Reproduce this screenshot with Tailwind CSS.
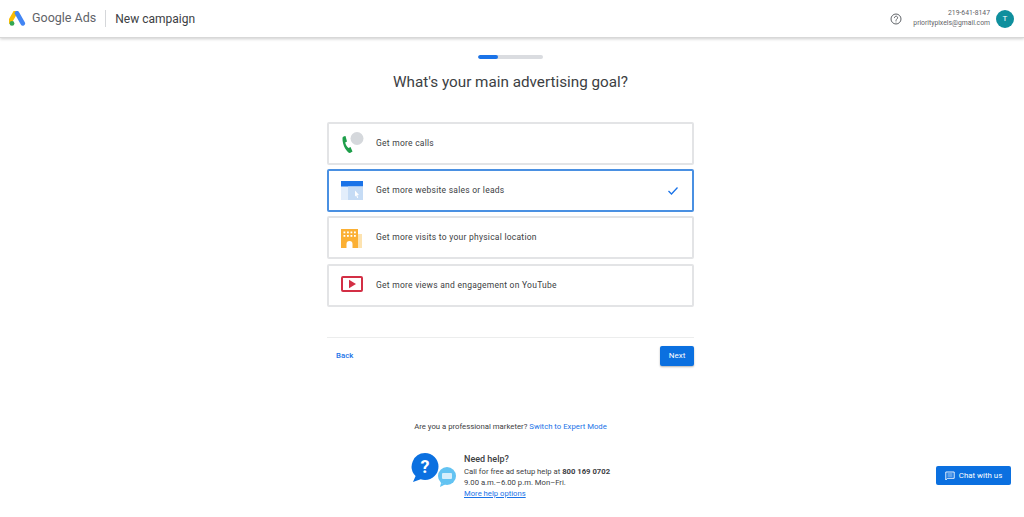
<!DOCTYPE html>
<html lang="en">

<head>
	<meta charset="UTF-8">
	<meta name="viewport" content="width=device-width, initial-scale=1.0">
	<title>New campaign - Google Ads</title>
	<script src="https://cdn.jsdelivr.net/npm/@tailwindcss/browser@4"></script>
</head>

<body class="bg-white h-[517px] overflow-hidden relative font-['Roboto',sans-serif] text-[#3c4043]">
	<!-- Header -->
	<header class="h-[38px] flex items-center justify-between bg-white border-b border-[#d8d8d8] shadow-[0_1px_3px_rgba(0,0,0,0.2)]">
		<div class="flex items-center pl-[9px]">
			<svg class="w-[17px] h-[15px]" viewBox="0 0 17 15">
				<path d="M6.2 1.6 1 10.6" stroke="#fbbc04" stroke-width="4.4" stroke-linecap="round" fill="none"/>
				<path d="M8 2.2 13.8 12.4" stroke="#4285f4" stroke-width="4.6" stroke-linecap="round" fill="none"/>
				<circle cx="3" cy="12.4" r="2.4" fill="#34a853"/>
			</svg>
			<span class="ml-[6px] text-[12.5px] text-[#5f6368]">Google Ads</span>
			<span class="ml-[9px] w-px h-[17px] bg-[#d5d7da]"></span>
			<span class="ml-[9px] text-[12px] text-[#3c4043]">New campaign</span>
		</div>
		<div class="flex items-center pr-[10px]">
			<svg class="w-[12px] h-[12px] text-[#5f6368]" viewBox="0 0 24 24" fill="none" stroke="currentColor" stroke-width="2">
				<circle cx="12" cy="12" r="10"/>
				<path d="M8.8 9.4a3.2 3.2 0 1 1 5 2.7c-1.1.8-1.8 1.4-1.8 2.9" stroke-linecap="round"/>
				<path d="M12 17.2v1.6"/>
			</svg>
			<div class="ml-[11px] text-right text-[6.8px] leading-[9.5px] text-[#5f6368]">
				<div>219-641-8147</div>
				<div>prioritypixels@gmail.com</div>
			</div>
			<div class="ml-[6px] w-[18px] h-[18px] rounded-full bg-[#0f8f9d] text-white text-[8px] flex items-center justify-center">T</div>
		</div>
	</header>

	<main class="w-[367px] ml-[327px]">
		<!-- Progress -->
		<div class="mt-[17px] mx-auto w-[65px] h-[4px] rounded-full bg-[#dadce0] overflow-hidden">
			<div class="w-[20px] h-full bg-[#1a73e8] rounded-full"></div>
		</div>
		<h1 class="mt-[11px] text-center whitespace-nowrap text-[15.25px] leading-[24px] text-[#3c4043]">What's your main advertising goal?</h1>

		<!-- Goals -->
		<div class="mt-[28px] flex flex-col">
			<div class="h-[43px] flex items-center border-2 border-[#e3e4e6] rounded-[2px]">
				<svg class="ml-[11px] w-[24px] h-[24px]" viewBox="0 0 24 24">
					<circle cx="17" cy="6.5" r="6.5" fill="#d5d8dc"/>
					<path d="M2.500 6C2.500 4.800 3.500 4.500 5.500 4L7 9.500 5.200 10.600C5.800 13 7 15 8.500 16L10.500 15 12.500 19.500 10 21C8 21.500 2 14 2.500 6z" fill="#1e9e4a"/>
				</svg>
				<span class="ml-[12px] text-[8.5px] tracking-[0.25px] text-[#3c4043]">Get more calls</span>
			</div>
			<div class="mt-[4px] h-[43px] flex items-center border-2 border-[#4a90e2] rounded-[2px]">
				<svg class="ml-[12px] w-[24px] h-[20px]" viewBox="0 0 24 20">
					<rect y="0" width="22" height="19" fill="#e3eefb"/>
					<rect y="0" width="22" height="5.5" fill="#1a73e8"/>
					<rect x="7" y="5.5" width="15" height="13.5" fill="#c6dcf5"/>
					<path d="M14 9.500 18 14l-1.800.2 1 2.600-1 .3-1-2.500-1.200 1z" fill="#fff"/>
				</svg>
				<span class="ml-[11px] text-[8.5px] tracking-[0.25px] text-[#3c4043]">Get more website sales or leads</span>
				<svg class="ml-auto mr-[13px] w-[12px] h-[10px]" viewBox="0 0 12 10" fill="none" stroke="#1a73e8" stroke-width="1.3">
					<path d="M1.500 5 4.500 8 10.500 1.500"/>
				</svg>
			</div>
			<div class="mt-[4px] h-[43px] flex items-center border-2 border-[#e3e4e6] rounded-[2px]">
				<svg class="ml-[11px] w-[24px] h-[20px]" viewBox="0 0 24 20">
					<rect x="16" y="6" width="6" height="14" fill="#fde3b0"/>
					<rect x="1" y="1" width="17" height="19" fill="#fbb034"/>
					<g fill="#fff">
						<rect x="3.5" y="3.5" width="1.8" height="1.8"/><rect x="7" y="3.5" width="1.8" height="1.8"/><rect x="10.5" y="3.5" width="1.8" height="1.8"/><rect x="14" y="3.5" width="1.8" height="1.8"/>
						<rect x="3.5" y="7" width="1.8" height="1.8"/><rect x="7" y="7" width="1.8" height="1.8"/><rect x="10.5" y="7" width="1.8" height="1.8"/><rect x="14" y="7" width="1.8" height="1.8"/>
						<path d="M6.500 20v-4a3 3 0 0 1 6 0v4z"/>
					</g>
				</svg>
				<span class="ml-[12px] text-[8.5px] tracking-[0.25px] text-[#3c4043]">Get more visits to your physical location</span>
			</div>
			<div class="mt-[5px] h-[43px] flex items-center border-2 border-[#e3e4e6] rounded-[2px]">
				<svg class="ml-[11px] mt-[-4px] w-[24px] h-[18px]" viewBox="0 0 24 18" fill="none">
					<rect x="2" y="2" width="20" height="14" rx="1" stroke="#d32f45" stroke-width="2"/>
					<path d="M9 4.800 16 9l-7 4.200z" fill="#d32f45"/>
				</svg>
				<span class="ml-[12px] text-[8.5px] tracking-[0.25px] text-[#3c4043]">Get more views and engagement on YouTube</span>
			</div>
		</div>

		<!-- Footer actions -->
		<div class="mt-[30px] border-t border-[#eceded] pt-[8px] flex items-center justify-between">
			<a href="#" class="ml-[9px] text-[7.8px] font-medium text-[#1a73e8]">Back</a>
			<button class="w-[34px] h-[20px] bg-[#0b70e0] text-white text-[8px] rounded-[2px] shadow-[0_1px_2px_rgba(0,0,0,0.3)]">Next</button>
		</div>

		<p class="mt-[55px] text-center text-[7.75px] leading-[12px] text-[#3c4043]">Are you a professional marketer? <a href="#" class="text-[#1a73e8]">Switch to Expert Mode</a></p>

		<!-- Help -->
		<div class="mt-[20px] ml-[84px] flex">
			<svg class="mt-[-1px] w-[46px] h-[36px] shrink-0" viewBox="0 0 46 36">
				<path d="M14 1a13.500 13.500 0 0 1 0 27c-1.500 0-3-.2-4.300-.7L2 30l2.600-6A13.500 13.500 0 0 1 14 1z" fill="#0b70e0"/>
				<text x="14" y="21" text-anchor="middle" font-family="Roboto" font-weight="700" font-size="18" fill="#fff">?</text>
				<circle cx="36" cy="24" r="9" fill="#63c3f2"/>
				<path d="M30 31l-1 4 6-3z" fill="#63c3f2"/>
				<rect x="31" y="21" width="10" height="6" rx="1" fill="#d5eefb"/>
			</svg>
			<div class="ml-[7px] text-[7.7px] leading-[11px] text-[#3c4043]">
				<div class="text-[9px] leading-[13px] font-medium">Need help?</div>
				<div>Call for free ad setup help at <b class="font-bold">800 169 0702</b></div>
				<div>9.00 a.m.–6.00 p.m. Mon–Fri.</div>
				<a href="#" class="underline text-[#1a73e8]">More help options</a>
			</div>
		</div>
	</main>

	<!-- Chat widget -->
	<button class="absolute left-[936px] top-[466px] w-[75px] h-[19px] bg-[#0b70e0] rounded-[2px] flex items-center justify-center text-white text-[7.9px]">
		<svg class="w-[10px] h-[10px] mr-[4px]" viewBox="0 0 10 10" fill="none" stroke="#fff" stroke-width="0.9">
			<path d="M.8 1h8.400v6.300H2.500L.8 9z"/>
			<path d="M2.500 3h5M2.500 5h5" stroke-width="0.7"/>
		</svg>
		Chat with us
	</button>
</body>

</html>
